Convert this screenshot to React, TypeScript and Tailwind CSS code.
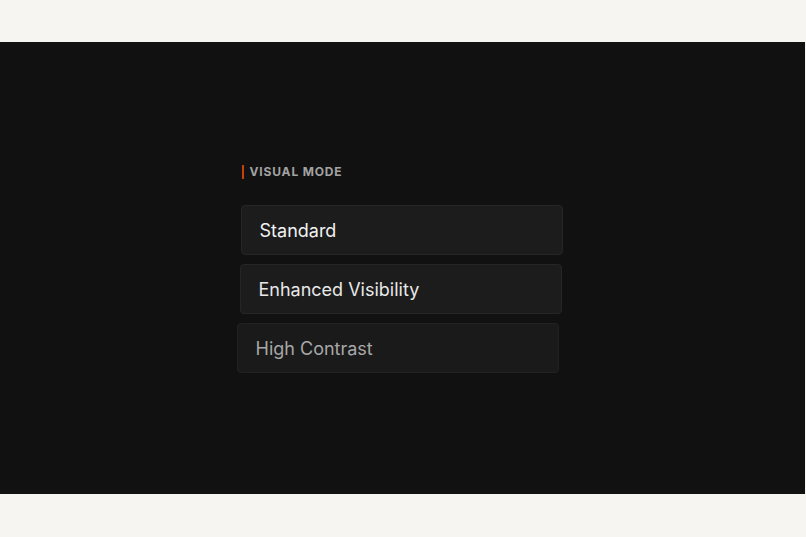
export default function App() {
  const font = { fontFamily: "Inter, 'Noto Sans', sans-serif" };
  return (
    <div className="min-h-[537px] w-[806px] bg-[#f6f5f1] pt-[42px]" style={font}>
      <div className="flex h-[452px] w-[805px] items-center justify-center bg-[#111111] pr-[4px]">
        <div className="flex w-[322px] flex-col">
          <div className="flex items-center gap-[6px] pl-[2px]">
            <span className="h-[14px] w-[2px] bg-[#c2410c]" />
            <span className="text-[12px] font-bold tracking-[0.07em] text-[#a3a3a3]">VISUAL MODE</span>
          </div>
          <div className="mt-[24px] flex flex-col gap-[9px]">
            <div className="flex h-[50px] translate-x-[1px] items-center rounded-[4px] border border-[#262626] bg-[#1c1c1c] pl-[18px] text-[18px] text-[#f2f2f2]">
              Standard
            </div>
            <div className="flex h-[50px] items-center rounded-[4px] border border-[#262626] bg-[#1c1c1c] pl-[18px] text-[18px] text-[#e8e8e8]">
              Enhanced Visibility
            </div>
            <div className="flex h-[50px] -translate-x-[3px] items-center rounded-[4px] border border-[#222222] bg-[#1a1a1a] pl-[18px] text-[18px] text-[#a8a8a8]">
              High Contrast
            </div>
          </div>
        </div>
      </div>
    </div>
  );
}
